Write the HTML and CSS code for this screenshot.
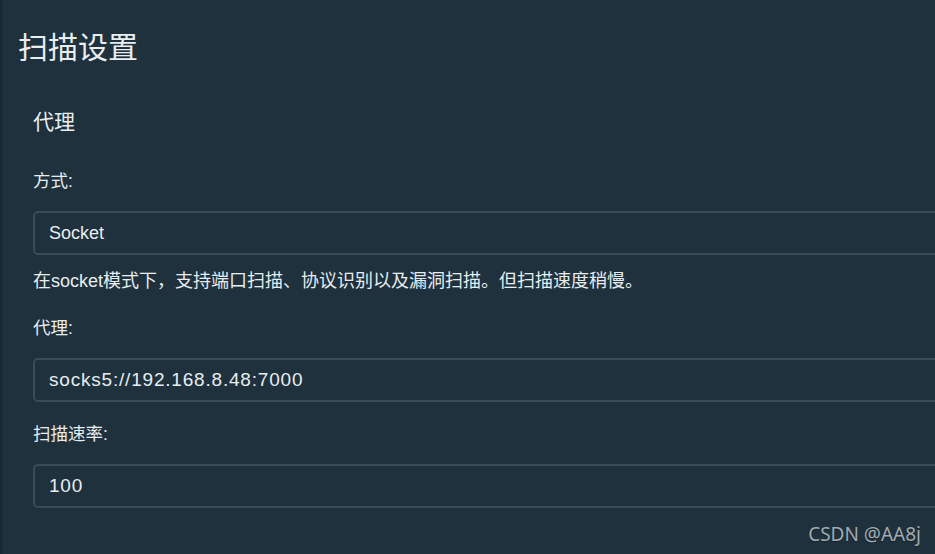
FILE: index.html
```html
<!DOCTYPE html>
<html lang="zh-CN">
<head>
    <meta charset="UTF-8" />
    <meta name="viewport" content="width=device-width, initial-scale=1" />
    <title>扫描设置</title>
    <link rel="stylesheet" href="styles.css">
</head>
<body>
    <div class="layout">
        <div class="sidebar-edge"></div>
        <main class="content">
            <h1 class="page-title">扫描设置</h1>

            <section class="panel">
                <h2 class="panel-title">代理</h2>

                <div class="field field-mode">
                    <label class="field-label" for="mode">方式:</label>
                    <div class="field-input field-select" id="mode">Socket</div>
                    <p class="field-help">在socket模式下，支持端口扫描、协议识别以及漏洞扫描。但扫描速度稍慢。</p>
                </div>

                <div class="field field-proxy">
                    <label class="field-label" for="proxy">代理:</label>
                    <input class="field-input" id="proxy" type="text" value="socks5://192.168.8.48:7000" />
                </div>

                <div class="field field-rate">
                    <label class="field-label" for="rate">扫描速率:</label>
                    <input class="field-input" id="rate" type="text" value="100" />
                </div>
            </section>
        </main>
    </div>

    <div class="watermark">CSDN @AA8j</div>
</body>
</html>
```

FILE: styles.css
```css
/* dark settings page */
html, body {
    margin: 0;
    height: 100%;
    overflow: hidden;
}
body {
    font-family: 'Liberation Sans', 'Noto Sans CJK SC', sans-serif;
    background: #1e313d;
    color: #e8edf0;
}
.layout {
    display: flex;
    min-height: 100vh;
}
.sidebar-edge {
    width: 3px;
    flex: none;
    background: #182933;
}
.content {
    flex: 1;
    padding: 30px 0 0 15px;
    min-width: 0;
}
.page-title {
    margin: 0;
    font-size: 30px;
    line-height: 36px;
    font-weight: 400;
}
.panel {
    margin: 43px -40px 0 0;
    padding-left: 15px;
}
.panel-title {
    margin: 0 0 35px;
    font-size: 21px;
    line-height: 25px;
    font-weight: 400;
}
.field-label {
    display: block;
    font-size: 17.5px;
    line-height: 24px;
    margin-bottom: 18px;
}
.field-input {
    display: block;
    box-sizing: border-box;
    width: 100%;
    height: 44px;
    padding: 0 14px;
    border: 2px solid #3b4c56;
    border-radius: 5px;
    background: transparent;
    color: #e8edf0;
    font-family: 'Liberation Sans', sans-serif;
    font-size: 19px;
    letter-spacing: 0.8px;
    line-height: 40px;
    outline: none;
}
.field-select {
    font-size: 18px;
    letter-spacing: 0;
}
.field-help {
    margin: 14px 0 0;
    font-size: 18px;
    line-height: 24px;
}
.field-proxy {
    margin-top: 23px;
}
.field-rate {
    margin-top: 20px;
}
.watermark {
    position: absolute;
    right: 14px;
    bottom: 7px;
    font-family: 'Noto Sans', sans-serif;
    font-size: 19px;
    color: #a3abb0;
    text-shadow: 0 1px 1px rgb(0 0 0 / 0.35);
}
```
